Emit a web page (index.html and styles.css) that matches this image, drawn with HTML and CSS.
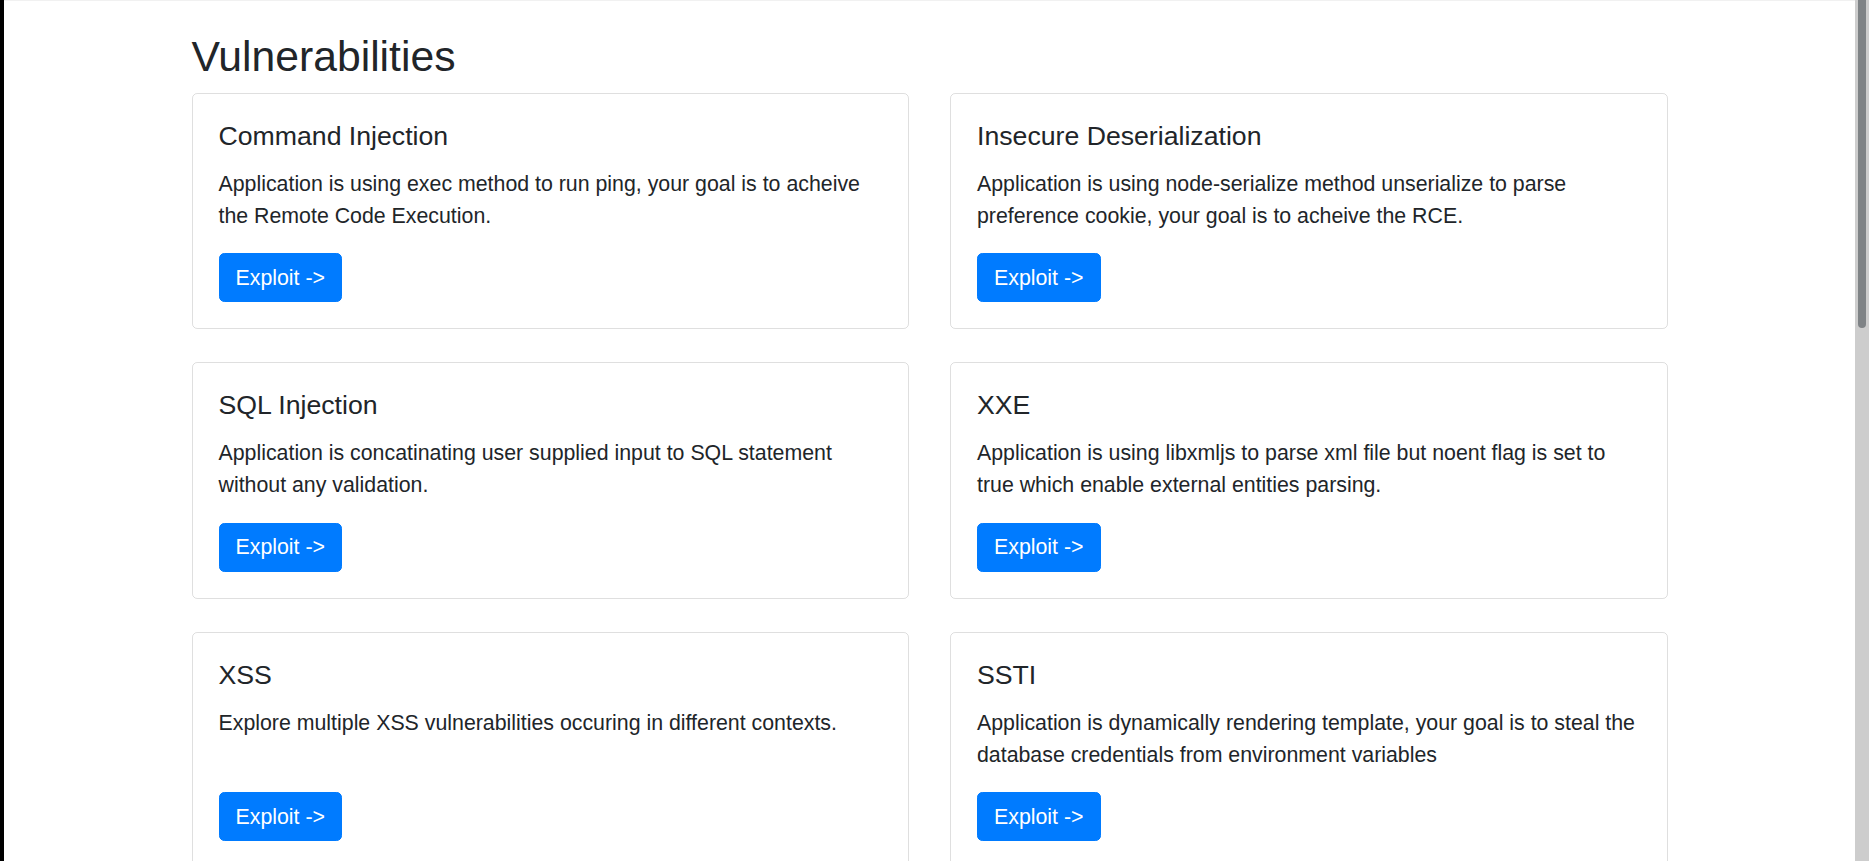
FILE: index.html
```html
<!DOCTYPE html>
<html lang="en">
<head>
<meta charset="utf-8">
<title>Vulnerabilities</title>
<link rel="stylesheet" href="styles.css">
</head>
<body>
<div class="edge"></div>
<main class="page">
  <div class="container">
    <h2 class="page-title">Vulnerabilities</h2>
    <div class="grid">
      <div class="card">
        <h5 class="card-title">Command Injection</h5>
        <p class="card-text">Application is using exec method to run ping, your goal is to acheive the Remote Code Execution.</p>
        <a class="btn" href="#">Exploit -&gt;</a>
      </div>
      <div class="card">
        <h5 class="card-title">Insecure Deserialization</h5>
        <p class="card-text">Application is using node-serialize method unserialize to parse preference cookie, your goal is to acheive the RCE.</p>
        <a class="btn" href="#">Exploit -&gt;</a>
      </div>
      <div class="card">
        <h5 class="card-title">SQL Injection</h5>
        <p class="card-text">Application is concatinating user supplied input to SQL statement without any validation.</p>
        <a class="btn" href="#">Exploit -&gt;</a>
      </div>
      <div class="card">
        <h5 class="card-title">XXE</h5>
        <p class="card-text">Application is using libxmljs to parse xml file but noent flag is set to true which enable external entities parsing.</p>
        <a class="btn" href="#">Exploit -&gt;</a>
      </div>
      <div class="card">
        <h5 class="card-title">XSS</h5>
        <p class="card-text">Explore multiple XSS vulnerabilities occuring in different contexts.</p>
        <a class="btn" href="#">Exploit -&gt;</a>
      </div>
      <div class="card">
        <h5 class="card-title">SSTI</h5>
        <p class="card-text">Application is dynamically rendering template, your goal is to steal the database credentials from environment variables</p>
        <a class="btn" href="#">Exploit -&gt;</a>
      </div>
    </div>
  </div>
</main>
<div class="scrollbar"><div class="thumb"></div></div>
</body>
</html>
```

FILE: styles.css
```css
html, body {
  margin: 0;
  padding: 0;
  height: 861px;
  overflow: hidden;
}

body {
  display: flex;
  background: #fff;
  color: #212529;
  font-family: "Liberation Sans", Arial, sans-serif;
  font-size: 21.33px;
  line-height: 32px;
}

.edge {
  width: 4px;
  flex: none;
  background: #000;
}

.page {
  flex: 1;
  min-width: 0;
  border-top: 1px solid #f1f1f1;
  padding-top: 30px;
  overflow: hidden;
}

.container {
  width: 1476px;
  margin: 0 auto;
}

.page-title {
  margin: 0 0 10.5px;
  font-size: 42.67px;
  font-weight: 400;
  line-height: 51.2px;
}

.grid {
  display: grid;
  grid-template-columns: 1fr 1fr;
  column-gap: 41px;
  row-gap: 33px;
}

.card {
  display: flex;
  flex-direction: column;
  border: 1px solid rgba(0, 0, 0, 0.125);
  border-radius: 5.3px;
  padding: 26px;
}

.card-title {
  margin: 0 0 16px;
  font-size: 26.67px;
  font-weight: 400;
  line-height: 32px;
}

.card-text {
  margin: 0 0 21.6px;
}

.btn {
  align-self: flex-start;
  margin-top: auto;
  display: inline-block;
  padding: 7.5px 16px;
  border: 1px solid #007bff;
  border-radius: 5.3px;
  background: #007bff;
  color: #fff;
  text-decoration: none;
  font-size: 21.33px;
  line-height: 32px;
}

.scrollbar {
  width: 14px;
  flex: none;
  box-sizing: border-box;
  padding-left: 3px;
  background: #cdcdcd;
}

.thumb {
  width: 8px;
  height: 328px;
  background: #7f8386;
  border-radius: 0 0 4px 4px;
}
```
